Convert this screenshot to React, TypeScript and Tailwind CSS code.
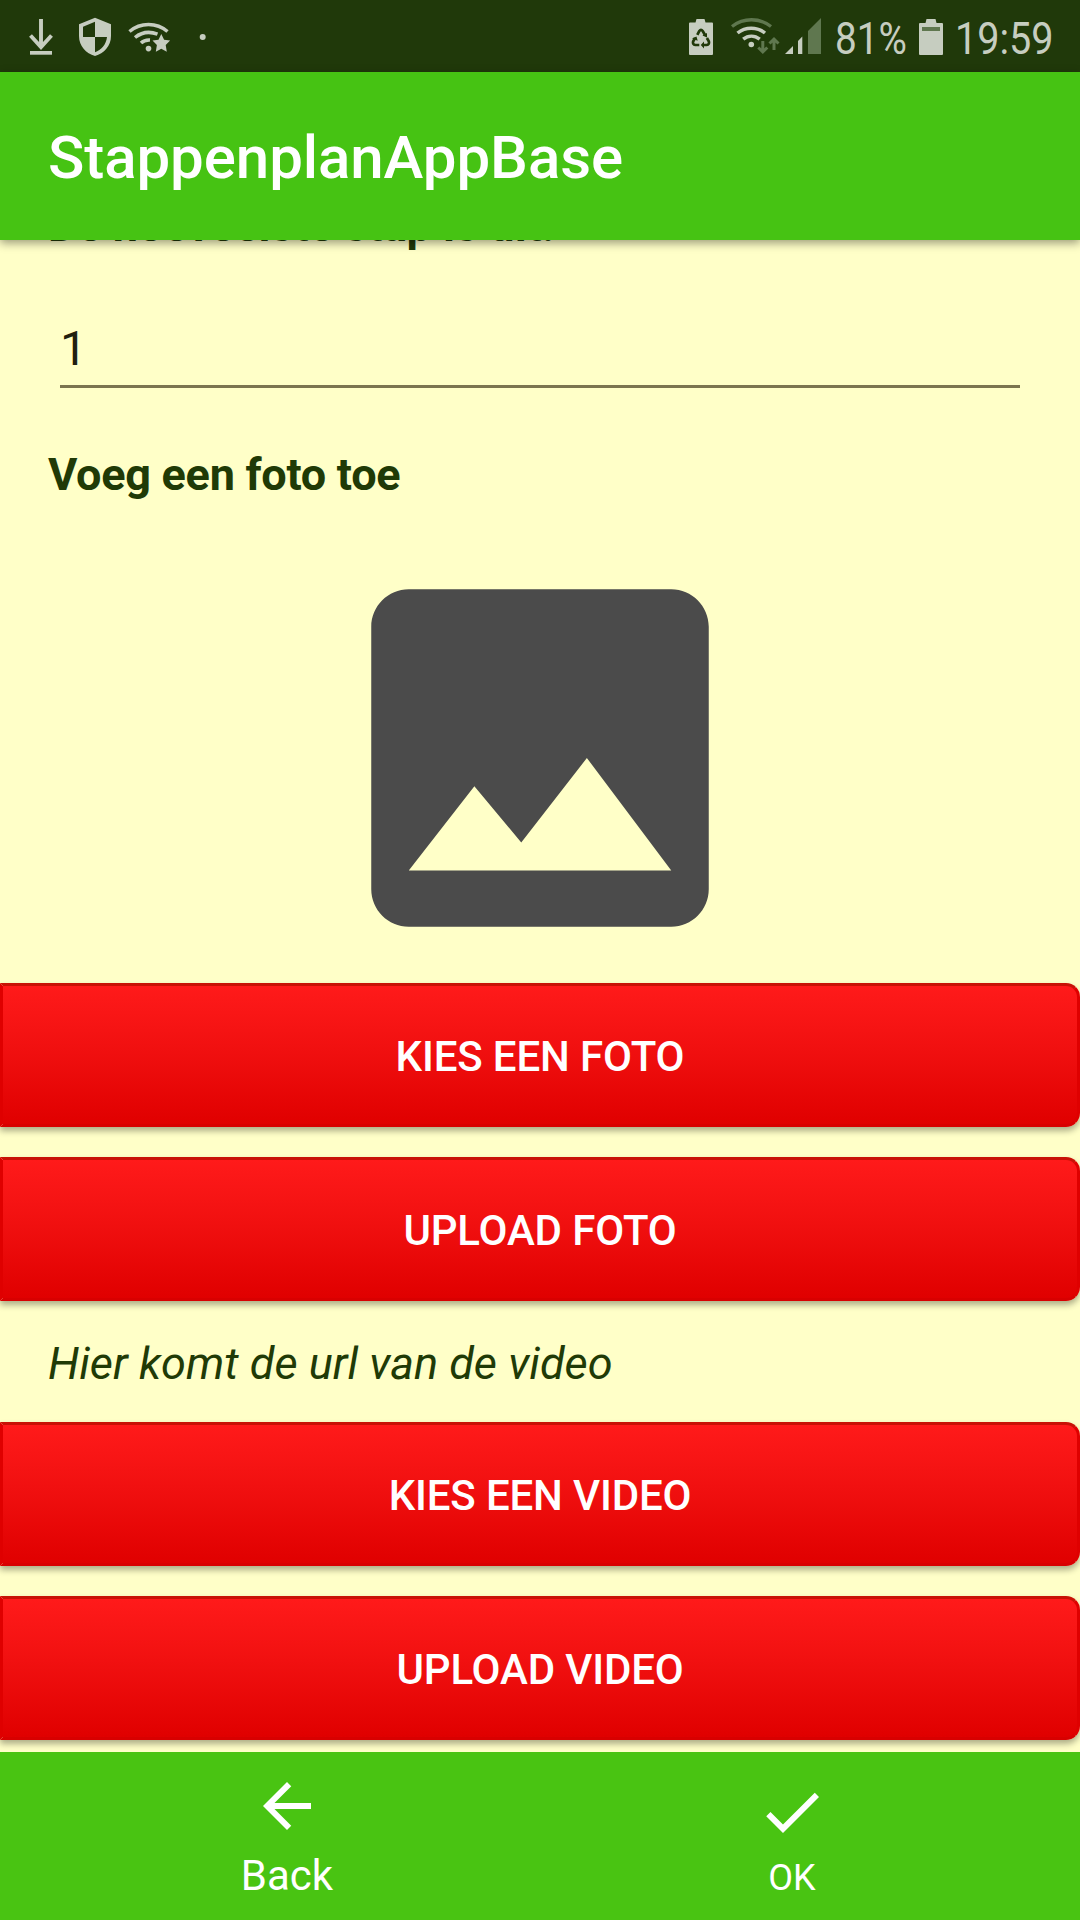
import React from "react";

const ICON = "#c6cdc0";
const DIM = "#5f774f";
const BG = "#20390a";

function NotificationIcons() {
  return (
    <svg className="block shrink-0" width="220" height="72" viewBox="0 0 220 72" fill="none">
      <path d="M41 19v29M30.500 35.500L41 47l10.500-11.500" stroke={ICON} strokeWidth="3.900" />
      <path d="M30 51h22v3.700H30z" fill={ICON} />
      <path
        fillRule="evenodd"
        fill={ICON}
        d="M95 17.800l16 6.400V36c0 10-7 17.500-16 20-9-2.500-16-10-16-20V24.200zM95 21.700l-12 5V37h12zM95 37v15.200c6-2 11.200-7.500 12-15.200z"
      />
      <path
        d="M129.500 31.500c11-9.300 27-9.300 38 0M135 37.500c6.500-5.300 15-6.200 22.500-3.400M141 43c2.500-2.500 5.500-3.200 9-3"
        stroke={ICON}
        strokeWidth="3.500"
      />
      <circle cx="148.500" cy="48.600" r="2.800" fill={ICON} />
      <path
        fill={ICON}
        d="M161.300 34l2.800 5.700 6 .9-4.400 4.400 1.100 6.700-5.500-3-5.500 3 1.100-6.700-4.400-4.400 6-.9z"
      />
      <circle cx="202.700" cy="37" r="3" fill={ICON} />
    </svg>
  );
}

function SaverBattery() {
  return (
    <svg className="block shrink-0" width="24" height="72" viewBox="0 0 24 72" fill="none">
      <path d="M7.500 19h8l1 3.500h6.500a1 1 0 0 1 1 1V54a1 1 0 0 1-1 1H1a1 1 0 0 1-1-1V23.500a1 1 0 0 1 1-1h5.500z" fill={ICON} />
      <path d="M8.300 34.800l2-3.800q1.700-2.300 3.400 0l2.200 3.800" stroke={BG} strokeWidth="2.700" />
      <path d="M17.900 38l2 3.500q.7 3-2.200 3.500h-4" stroke={BG} strokeWidth="2.700" />
      <path d="M10.300 45H6.300q-2.900-.5-2.200-3.500l2-3.500" stroke={BG} strokeWidth="2.700" />
      <path d="M18 33v4.500l-4.600-2zM15 41.500v7L11.800 45zM3 38.500l4.500-2 1.200 4.200z" fill={BG} />
    </svg>
  );
}

function WifiStatus() {
  return (
    <svg className="block shrink-0" width="50" height="72" viewBox="730 0 50 72" fill="none">
      <path d="M732 26.500c11.500-9 27.500-9 39 0" stroke={DIM} strokeWidth="3.300" />
      <path d="M737.500 33c8-6.500 19.500-6.500 27.500 0M743.200 39.200c5-4 11.500-4 16.500 0" stroke={ICON} strokeWidth="3.500" />
      <circle cx="751.300" cy="44.500" r="2.800" fill={ICON} />
      <path d="M762.800 41v11M758.300 47.500l4.500 4.500 4.500-4.500M774 50V39.500M769.500 43.500l4.500-4.500 4.500 4.500" stroke={DIM} strokeWidth="3" />
    </svg>
  );
}

function SignalStatus() {
  return (
    <svg className="block shrink-0" width="38" height="72" viewBox="784 0 38 72">
      <path d="M785 54h8v-8zM798 54h4.300V36.500l-4.300 4.500z" fill={ICON} />
      <path d="M808 54h13V18l-13 13z" fill={DIM} />
    </svg>
  );
}

function Battery() {
  return (
    <svg className="block shrink-0" width="24" height="72" viewBox="0 0 24 72">
      <path d="M7.500 19h9l1 4H23a1 1 0 0 1 1 1v30a1 1 0 0 1-1 1H1a1 1 0 0 1-1-1V24a1 1 0 0 1 1-1h5.500z" fill={ICON} />
      <path d="M3 27h18v4H3z" fill={DIM} />
    </svg>
  );
}

function StatusBar() {
  return (
    <div className="flex h-[72px] shrink-0 items-center justify-between bg-[#20390a] text-[45px] leading-[72px] text-[#c6cdc0]">
      <NotificationIcons />
      <div className="flex h-[72px] w-[391px] items-center">
        <SaverBattery />
        <div className="ml-[17px] flex">
          <WifiStatus />
        </div>
        <div className="ml-1 flex">
          <SignalStatus />
        </div>
        <div className="ml-[13px] h-[72px] w-[84px] pt-[3px]">
          <span className="block w-max origin-left scale-x-[0.860]">81%</span>
        </div>
        <Battery />
        <div className="ml-[12px] h-[72px] w-[98px] pt-[3px]">
          <span className="block w-max origin-left scale-x-[0.880]">19:59</span>
        </div>
      </div>
    </div>
  );
}

function RedButton({ label }: { label: string }) {
  return (
    <button className="block h-36 w-full shrink-0 rounded-r-[14px] border-[3px] border-x-[#df0000] border-t-[#c81206] border-b-[#d80000] bg-linear-to-b from-[#ff1a1a] to-[#e00000] pt-1 text-center text-[42px] leading-[50px] font-medium tracking-[-0.150px] text-white shadow-[0_4px_6px_rgba(0,0,0,0.32)]">
      {label}
    </button>
  );
}

function BottomBar() {
  return (
    <nav className="relative flex h-[168px] shrink-0 justify-center bg-[#49c412] text-white">
      <div className="flex w-[504px] flex-col items-center pt-[18px] pr-[2px]">
        <svg width="72" height="72" viewBox="0 0 24 24" fill="currentColor">
          <path d="M20 11H7.830l5.590-5.590L12 4l-8 8 8 8 1.410-1.410L7.830 13H20v-2z" />
        </svg>
        <span className="mt-[9px] text-[42px] leading-[50px]">Back</span>
      </div>
      <div className="flex w-[504px] flex-col items-center pt-6">
        <svg width="72" height="72" viewBox="0 0 24 24" fill="currentColor">
          <path d="M9 16.170L4.830 12l-1.420 1.410L9 19 21 7l-1.410-1.410z" />
        </svg>
        <span className="mt-[6px] text-[36px] leading-[48px]">OK</span>
      </div>
    </nav>
  );
}

export default function App() {
  return (
    <div className="flex h-[1920px] w-[1080px] flex-col overflow-hidden bg-[#ffffc8] font-[Roboto,sans-serif]">
      <StatusBar />
      <header className="relative z-10 flex h-[168px] shrink-0 items-center bg-[#46c313] pl-12 shadow-[0_3px_9px_rgba(0,0,0,0.4)]">
        <h1 className="pt-[4px] text-[60px] leading-[70px] font-medium tracking-[-0.070px] text-white">
          StappenplanAppBase
        </h1>
      </header>
      <main className="flex min-h-0 flex-1 flex-col overflow-hidden text-[45px] text-[#203a06]">
        <p className="-mt-[41px] h-[53px] shrink-0 pl-12 leading-[53px] font-bold">De hoeveelste stap is dit:</p>
        <div className="mx-[60px] mt-[69px] h-[67px] shrink-0 border-b-[3px] border-[#7b754f] text-[48px] leading-[56px] text-[#20200f]">
          1
        </div>
        <p className="mt-[60px] h-[53px] shrink-0 pl-12 leading-[53px] font-bold tracking-[-0.280px]">
          Voeg een foto toe
        </p>
        <svg className="mt-8 block shrink-0 self-center" width="450" height="450" viewBox="0 0 24 24" fill="#4b4b4b">
          <path d="M21 19V5c0-1.100-.9-2-2-2H5c-1.100 0-2 .9-2 2v14c0 1.100.9 2 2 2h14c1.100 0 2-.9 2-2zM8.500 13.500l2.500 3.010L14.500 12l4.500 6H5l3.500-4.500z" />
        </svg>
        <div className="flex flex-col gap-[30px]">
          <RedButton label="KIES EEN FOTO" />
          <RedButton label="UPLOAD FOTO" />
        </div>
        <p className="mt-9 h-[53px] shrink-0 pl-12 leading-[53px] tracking-[0.040px] italic">
          Hier komt de url van de video
        </p>
        <div className="mt-8 flex flex-col gap-[30px]">
          <RedButton label="KIES EEN VIDEO" />
          <RedButton label="UPLOAD VIDEO" />
        </div>
      </main>
      <BottomBar />
    </div>
  );
}
